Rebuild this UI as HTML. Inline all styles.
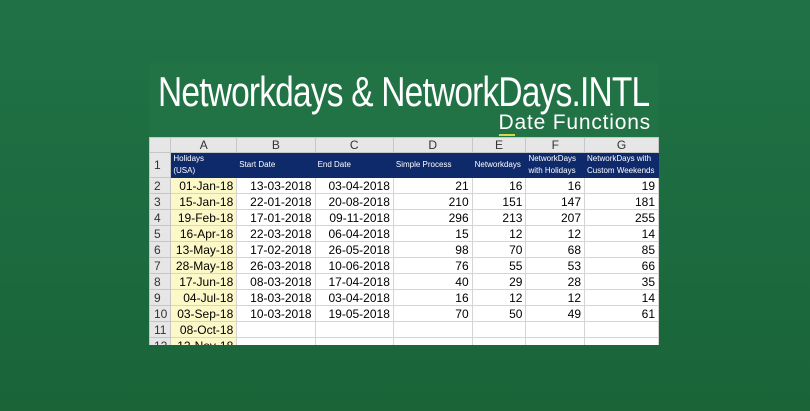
<!DOCTYPE html>
<html><head><style>
body{margin:0;width:810px;height:411px;overflow:hidden;background:linear-gradient(180deg,#207246 0%,#1c6a3f 60%,#1a6438 100%);font-family:"Liberation Sans",sans-serif;}
.card{position:absolute;left:149px;top:63px;width:510px;height:282px;background:#217346;overflow:hidden;}
.t1{position:absolute;left:9px;top:5px;font-size:42px;line-height:48px;color:#fff;font-weight:300;letter-spacing:-1px;white-space:nowrap;transform:scaleX(0.797);transform-origin:left top;}
.t2{position:absolute;right:8px;top:49px;font-size:21px;line-height:22px;color:#fff;letter-spacing:0.8px;}
.t2 u{text-decoration:none;border-bottom:2px solid #d6d84a;}
table{position:absolute;left:0;top:74px;border-collapse:collapse;table-layout:fixed;background:#fff;font-size:12px;}
td{border:1px solid #d4d4d4;height:15px;padding:0 3px;white-space:nowrap;overflow:hidden;text-align:right;color:#000;}
tr.h td{background:#e6e6e6;text-align:center;color:#333;height:14px;border-color:#c6c6c6;}
td.n{background:#e6e6e6;text-align:left;color:#333;padding-left:4px;border-color:#c6c6c6;}
tr.b td.x{background:#0f2a6b;color:#fff;font-size:8px;text-align:left;height:24px;line-height:12px;border-color:#0f2a6b;padding:0 2px;}
td.a{background:#fdf8c8;}
</style></head><body>
<div class="card">
<div class="t1">Networkdays &amp; NetworkDays.INTL</div>
<div class="t2"><u>D</u>ate Functions</div>
<table>
<colgroup><col style="width:20px"><col style="width:66px"><col style="width:79px"><col style="width:79px"><col style="width:80px"><col style="width:54px"><col style="width:59px"><col style="width:74px"></colgroup>
<tr class="h"><td style="background:#e6e6e6"></td><td>A</td><td>B</td><td>C</td><td>D</td><td>E</td><td>F</td><td>G</td></tr>
<tr class="b"><td class="n">1</td><td class="x">Holidays<br>(USA)</td><td class="x">Start Date</td><td class="x">End Date</td><td class="x">Simple Process</td><td class="x">Networkdays</td><td class="x">NetworkDays<br>with Holidays</td><td class="x">NetworkDays with<br>Custom Weekends</td></tr>
<tr><td class="n">2</td><td class="a">01-Jan-18</td><td>13-03-2018</td><td>03-04-2018</td><td>21</td><td>16</td><td>16</td><td>19</td></tr>
<tr><td class="n">3</td><td class="a">15-Jan-18</td><td>22-01-2018</td><td>20-08-2018</td><td>210</td><td>151</td><td>147</td><td>181</td></tr>
<tr><td class="n">4</td><td class="a">19-Feb-18</td><td>17-01-2018</td><td>09-11-2018</td><td>296</td><td>213</td><td>207</td><td>255</td></tr>
<tr><td class="n">5</td><td class="a">16-Apr-18</td><td>22-03-2018</td><td>06-04-2018</td><td>15</td><td>12</td><td>12</td><td>14</td></tr>
<tr><td class="n">6</td><td class="a">13-May-18</td><td>17-02-2018</td><td>26-05-2018</td><td>98</td><td>70</td><td>68</td><td>85</td></tr>
<tr><td class="n">7</td><td class="a">28-May-18</td><td>26-03-2018</td><td>10-06-2018</td><td>76</td><td>55</td><td>53</td><td>66</td></tr>
<tr><td class="n">8</td><td class="a">17-Jun-18</td><td>08-03-2018</td><td>17-04-2018</td><td>40</td><td>29</td><td>28</td><td>35</td></tr>
<tr><td class="n">9</td><td class="a">04-Jul-18</td><td>18-03-2018</td><td>03-04-2018</td><td>16</td><td>12</td><td>12</td><td>14</td></tr>
<tr><td class="n">10</td><td class="a">03-Sep-18</td><td>10-03-2018</td><td>19-05-2018</td><td>70</td><td>50</td><td>49</td><td>61</td></tr>
<tr><td class="n">11</td><td class="a">08-Oct-18</td><td></td><td></td><td></td><td></td><td></td><td></td></tr>
<tr><td class="n">12</td><td class="a">12-Nov-18</td><td></td><td></td><td></td><td></td><td></td><td></td></tr>
</table>
</div>
</body></html>
